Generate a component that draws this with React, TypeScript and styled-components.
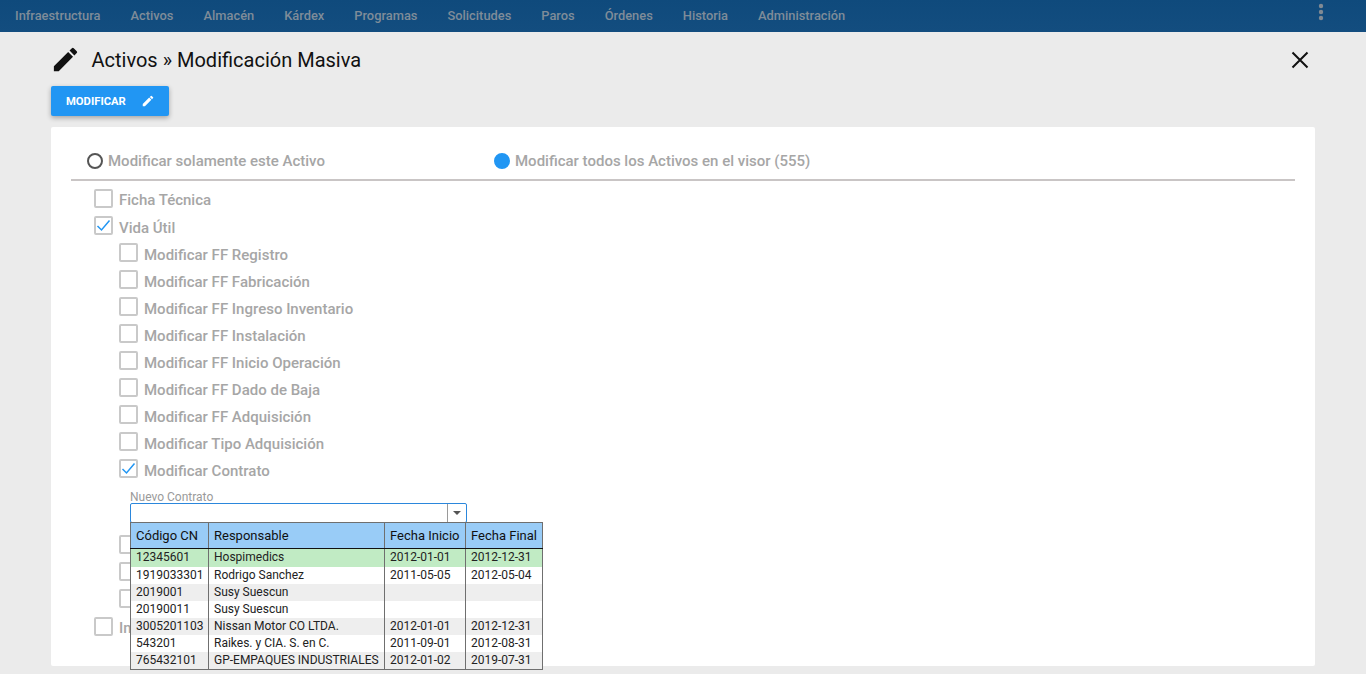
import React, { FC } from "react";
import styled, { createGlobalStyle } from "styled-components";

const GlobalStyle = createGlobalStyle`
    html, body {
        margin: 0;
        height: 100%;
        overflow: hidden;
        background: #ebebeb;
        font-family: Roboto, "Liberation Sans", sans-serif;
    }
`;

const Page = styled.div`
    width: 1366px;
    height: 674px;
    overflow: hidden;
`;

const TopBar = styled.nav`
    height: 32px;
    background: linear-gradient(#0f4a7c, #134d7f);
    display: flex;
    align-items: center;
    padding: 0 41px 0 15px;
    gap: 30px;
`;

const TopItem = styled.span`
    font-size: 12.87px;
    font-weight: 500;
    color: #7f8c99;
    position: relative;
    top: -1px;
`;

const Dots = styled.svg`
    margin-left: auto;
    position: relative;
    top: -4px;
`;

const Content = styled.main`
    padding: 0 51px;
`;

const TitleRow = styled.header`
    height: 54px;
    box-sizing: border-box;
    display: flex;
    align-items: center;
    padding: 2px 6px 0 0;
`;

const TitleIcon = styled.span`
    display: flex;
    margin: -2px 0 0 -1px;
`;

const Title = styled.h1`
    margin: 0 0 0 10.5px;
    font-size: 20px;
    font-weight: 400;
    color: #111;
    flex: 1;
`;

const ModifyButton = styled.button`
    width: 118px;
    height: 30px;
    border: none;
    border-radius: 2px;
    background: #2196f3;
    color: #fff;
    font-family: inherit;
    font-size: 11.25px;
    font-weight: 700;
    display: flex;
    align-items: center;
    gap: 15px;
    padding: 0 0 0 15px;
    box-shadow: 0 2px 5px rgba(0, 0, 0, 0.3);
`;

const Card = styled.section`
    margin-top: 11px;
    height: 539px;
    background: #fff;
    border-radius: 2px;
    padding: 0 20px;
    box-sizing: border-box;
`;

const RadioBar = styled.div`
    height: 54px;
    box-sizing: border-box;
    border-bottom: 2px solid #c9c5c5;
    display: flex;
    align-items: flex-start;
    padding: 25px 0 0 16px;
`;

const RadioOption = styled.label`
    width: 407px;
    display: flex;
    align-items: center;
    gap: 5px;
`;

const RadioMark = styled.span<{ $on?: boolean }>`
    width: 16px;
    height: 16px;
    box-sizing: border-box;
    border-radius: 50%;
    border: 2px solid ${(p) => (p.$on ? "#2196f3" : "#555")};
    background: ${(p) => (p.$on ? "#2196f3" : "#fff")};
`;

const LabelText = styled.span`
    font-size: 15px;
    font-weight: 500;
    color: #a6a6a6;
    white-space: nowrap;
`;

const Checks = styled.div`
    padding-top: 5px;
    position: relative;
`;

const CheckRow = styled.label<{ $sub?: boolean; $h?: number }>`
    height: ${(p) => p.$h ?? 27}px;
    display: flex;
    align-items: center;
    gap: 6px;
    padding-left: ${(p) => (p.$sub ? 48 : 23)}px;
`;

const Box = styled.span`
    width: 19px;
    height: 19px;
    box-sizing: border-box;
    border: 2px solid #c9c9c9;
    border-radius: 2px;
    background: #fff;
    display: flex;
    align-items: center;
    justify-content: center;
    position: relative;
    top: -2px;
`;

const ContractField = styled.div`
    position: relative;
    margin-left: 59px;
    width: 337px;
    height: 49px;
    padding-top: 7px;
    box-sizing: border-box;
`;

const FieldLabel = styled.div`
    font-size: 12px;
    color: #9a9a9a;
    line-height: 12px;
`;

const Combo = styled.div`
    height: 20px;
    box-sizing: border-box;
    border: 1px solid #2b87dc;
    border-radius: 2px;
    display: flex;
    justify-content: flex-end;
    background: #fff;
`;

const ComboArrow = styled.span`
    width: 18px;
    border-left: 1px solid #9a9a9a;
    display: flex;
    align-items: center;
    justify-content: center;
    &::after {
        content: "";
        border-left: 4px solid transparent;
        border-right: 4px solid transparent;
        border-top: 4px solid #555;
    }
`;

const DropTable = styled.table`
    position: absolute;
    left: 0;
    top: 38px;
    width: 412px;
    border-collapse: collapse;
    table-layout: fixed;
    background: #fff;
    border: 1px solid #6f6f6f;
    font-size: 12px;
    color: #222;
    z-index: 2;
`;

const HeadCell = styled.th<{ $w: number }>`
    width: ${(p) => p.$w}px;
    height: 26px;
    padding: 0 0 0 5px;
    box-sizing: border-box;
    background: #99ccf7;
    border-left: 1px solid #6f6f6f;
    border-bottom: 1px solid #111;
    font-size: 13px;
    font-weight: 400;
    color: #111;
    text-align: left;
    white-space: nowrap;
`;

const BodyRow = styled.tr<{ $bg: string; $h: number }>`
    background: ${(p) => p.$bg};
    height: ${(p) => p.$h}px;
`;

const BodyCell = styled.td`
    padding: 0 0 0 5px;
    border-left: 1px solid #6f6f6f;
    white-space: nowrap;
    overflow: hidden;
    line-height: 13px;
`;

const PencilIcon: FC<{ size: number; color: string }> = ({ size, color }) => (
    <svg width={size} height={size} viewBox="0 0 24 24" fill={color}>
        <path d="M3 17.25V21h3.75L17.81 9.94l-3.75-3.75L3 17.25zM20.71 7.04a1 1 0 0 0 0-1.41l-2.34-2.34a1 1 0 0 0-1.41 0l-1.83 1.83 3.75 3.75 1.83-1.83z" />
    </svg>
);

const Tick = () => (
    <svg width="15" height="15" viewBox="0 0 15 15" fill="none" stroke="#2196f3" strokeWidth="1.5">
        <path d="M1.5 8l4 4L13.5 2.5" />
    </svg>
);

const Check: FC<{ label?: string; on?: boolean; sub?: boolean; h?: number }> = ({ label, on, sub, h }) => (
    <CheckRow $sub={sub} $h={h}>
        <Box>{on && <Tick />}</Box>
        {label && <LabelText>{label}</LabelText>}
    </CheckRow>
);

const menu = ["Infraestructura", "Activos", "Almacén", "Kárdex", "Programas", "Solicitudes", "Paros", "Órdenes", "Historia", "Administración"];

const subOptions = [
    "Modificar FF Registro",
    "Modificar FF Fabricación",
    "Modificar FF Ingreso Inventario",
    "Modificar FF Instalación",
    "Modificar FF Inicio Operación",
    "Modificar FF Dado de Baja",
    "Modificar FF Adquisición",
    "Modificar Tipo Adquisición",
];

const columns = [
    { title: "Código CN", w: 78 },
    { title: "Responsable", w: 176 },
    { title: "Fecha Inicio", w: 81 },
    { title: "Fecha Final", w: 77 },
];

const rows = [
    { c: ["12345601", "Hospimedics", "2012-01-01", "2012-12-31"], bg: "#c1ebc4", h: 18 },
    { c: ["1919033301", "Rodrigo Sanchez", "2011-05-05", "2012-05-04"], bg: "#fff", h: 17 },
    { c: ["2019001", "Susy Suescun", "", ""], bg: "#eeeeee", h: 17 },
    { c: ["20190011", "Susy Suescun", "", ""], bg: "#fff", h: 17 },
    { c: ["3005201103", "Nissan Motor CO LTDA.", "2012-01-01", "2012-12-31"], bg: "#eeeeee", h: 17 },
    { c: ["543201", "Raikes. y CIA. S. en C.", "2011-09-01", "2012-08-31"], bg: "#fff", h: 17 },
    { c: ["765432101", "GP-EMPAQUES INDUSTRIALES", "2012-01-02", "2019-07-31"], bg: "#eeeeee", h: 18 },
];

const App: FC = () => {
    return (
        <Page>
            <GlobalStyle />
            <TopBar>
                {menu.map((m) => (
                    <TopItem key={m}>{m}</TopItem>
                ))}
                <Dots width="8" height="18" viewBox="0 0 8 18" fill="#808a94">
                    <circle cx="4" cy="3" r="2.2" />
                    <circle cx="4" cy="9" r="2.2" />
                    <circle cx="4" cy="15" r="2.2" />
                </Dots>
            </TopBar>
            <Content>
                <TitleRow>
                    <TitleIcon>
                        <PencilIcon size={31} color="#111" />
                    </TitleIcon>
                    <Title>Activos » Modificación Masiva</Title>
                    <svg width="18" height="18" viewBox="0 0 18 18" stroke="#111" strokeWidth="2">
                        <path d="M1.5 1.5l15 15M16.5 1.5l-15 15" />
                    </svg>
                </TitleRow>
                <ModifyButton>
                    MODIFICAR
                    <PencilIcon size={14} color="#fff" />
                </ModifyButton>
                <Card>
                    <RadioBar>
                        <RadioOption>
                            <RadioMark />
                            <LabelText>Modificar solamente este Activo</LabelText>
                        </RadioOption>
                        <RadioOption>
                            <RadioMark $on />
                            <LabelText>Modificar todos los Activos en el visor (555)</LabelText>
                        </RadioOption>
                    </RadioBar>
                    <Checks>
                        <Check label="Ficha Técnica" h={28} />
                        <Check label="Vida Útil" on />
                        {subOptions.map((s) => (
                            <Check key={s} label={s} sub />
                        ))}
                        <Check label="Modificar Contrato" on sub />
                        <ContractField>
                            <FieldLabel>Nuevo Contrato</FieldLabel>
                            <Combo>
                                <ComboArrow />
                            </Combo>
                            <DropTable>
                                <thead>
                                    <tr>
                                        {columns.map((c) => (
                                            <HeadCell key={c.title} $w={c.w}>
                                                {c.title}
                                            </HeadCell>
                                        ))}
                                    </tr>
                                </thead>
                                <tbody>
                                    {rows.map((r) => (
                                        <BodyRow key={r.c[0]} $bg={r.bg} $h={r.h}>
                                            {r.c.map((v, i) => (
                                                <BodyCell key={i}>{v}</BodyCell>
                                            ))}
                                        </BodyRow>
                                    ))}
                                </tbody>
                            </DropTable>
                        </ContractField>
                        <Check sub />
                        <Check sub />
                        <Check sub />
                        <Check label="In" h={28} />
                    </Checks>
                </Card>
            </Content>
        </Page>
    );
};

export default App;
